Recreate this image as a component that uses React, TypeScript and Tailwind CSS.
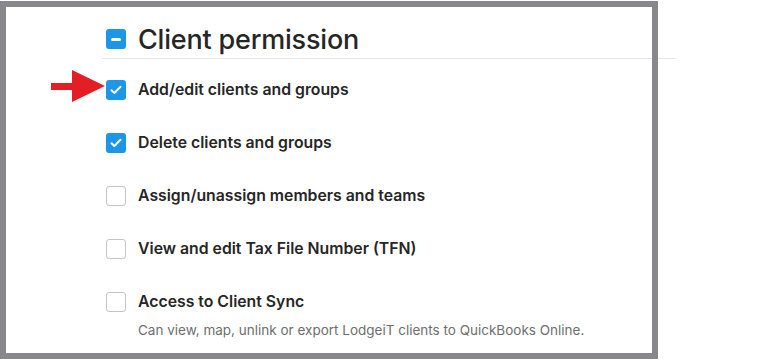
import React from "react";

const permissions = [
  { label: "Add/edit clients and groups", checked: true },
  { label: "Delete clients and groups", checked: true },
  { label: "Assign/unassign members and teams", checked: false },
  { label: "View and edit Tax File Number (TFN)", checked: false },
  {
    label: "Access to Client Sync",
    checked: false,
    hint: "Can view, map, unlink or export LodgeiT clients to QuickBooks Online.",
  },
];

function Checkbox({ checked }: { checked: boolean }) {
  if (checked) {
    return (
      <span className="flex h-5 w-5 shrink-0 items-center justify-center rounded-[3px] bg-[#1d96e8]">
        <svg width="12" height="10" viewBox="0 0 12 10" fill="none">
          <path d="M1.5 5.2L4.4 8L10.5 1.8" stroke="white" strokeWidth="2" strokeLinecap="round" strokeLinejoin="round" />
        </svg>
      </span>
    );
  }
  return <span className="h-5 w-5 shrink-0 rounded-[3px] border border-[#c4c4c4] bg-white" />;
}

export default function App() {
  return (
    <div
      className="relative h-[361px] w-[758px] overflow-hidden bg-white text-[#262626]"
      style={{ fontFamily: "Inter, 'Noto Sans', sans-serif" }}
    >
      <div className="ml-[102px] w-[573px]">
        {/* Header */}
        <div className="flex h-[59px] items-center gap-3 border-b border-[#e4e4e4] pb-[9px] pl-1 pt-[29px]">
          <span className="flex h-5 w-5 items-center justify-center rounded-[3px] bg-[#1d96e8]">
            <span className="h-[3px] w-[10px] rounded-sm bg-white" />
          </span>
          <h2 className="text-[27px] font-medium leading-none tracking-[-0.2px]">Client permission</h2>
        </div>

        {/* Permission rows */}
        <div className="flex flex-col gap-[33px] pl-1 pt-[21px]">
          {permissions.map((p) => (
            <div key={p.label}>
              <label className="flex h-5 items-center gap-3">
                <Checkbox checked={p.checked} />
                <span className="text-[15.8px] font-semibold leading-5">{p.label}</span>
              </label>
              {p.hint && (
                <p className="mt-[8px] pl-8 text-[13.5px] leading-5 text-[#6e6e6e]">{p.hint}</p>
              )}
            </div>
          ))}
        </div>
      </div>

      {/* Annotation arrow */}
      <svg className="absolute left-[51px] top-[70px]" width="54" height="32" viewBox="0 0 54 32">
        <rect x="0" y="13" width="22" height="7" fill="#e31e24" />
        <polygon points="21,0 54,16 21,32" fill="#e31e24" />
      </svg>

      {/* Screenshot frame */}
      <div className="pointer-events-none absolute left-0 top-[1px] h-[358px] w-[658px] border-[6px] border-[#88888c]" />
    </div>
  );
}
